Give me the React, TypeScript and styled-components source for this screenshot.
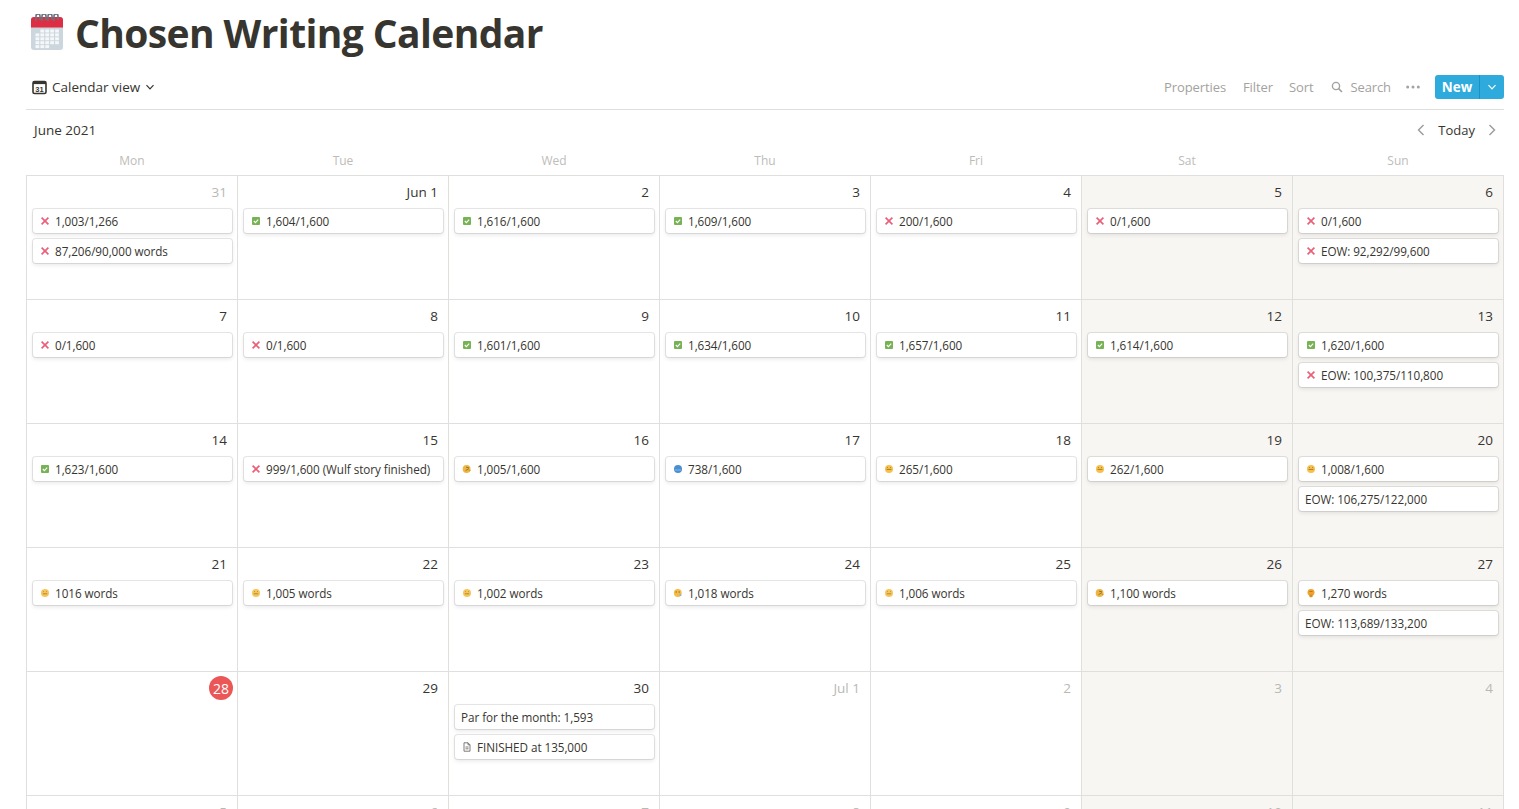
import React from "react";
import styled, { createGlobalStyle } from "styled-components";

const Global = createGlobalStyle`
  html, body { margin: 0; padding: 0; background: #fff; overflow: hidden; }
  body { font-family: "Open Sans", "Noto Sans", "Liberation Sans", sans-serif; color: #37352f; }
`;

const Page = styled.div`
  width: 1519px;
  height: 809px;
  overflow: hidden;
  padding: 0 15px 0 26px;
  box-sizing: border-box;
`;
const TitleRow = styled.div`
  display: flex;
  align-items: center;
  gap: 11px;
  height: 67px;
`;
const Title = styled.h1`
  margin: 0 0 2px;
  font-size: 39px;
  line-height: 48px;
  font-weight: 700;
  color: #37352f;
  letter-spacing: -0.6px;
`;
const Toolbar = styled.div`
  display: flex;
  align-items: center;
  height: 40px;
  border-bottom: 1px solid #dfdfde;
  padding-bottom: 2px;
`;
const ViewName = styled.div`
  display: flex;
  align-items: center;
  gap: 5px;
  padding-left: 6px;
  font-size: 13.5px;
  color: #37352f;
`;
const Spacer = styled.div`
  flex: 1;
`;
const Tool = styled.span<{ $gap?: number }>`
  font-size: 13px;
  letter-spacing: -0.1px;
  color: #a3a29e;
  margin-right: ${(p) => p.$gap ?? 16}px;
  display: inline-flex;
  align-items: center;
  gap: 7px;
`;
const NewButton = styled.div`
  display: flex;
  width: 69px;
  height: 24px;
  border-radius: 3px;
  background: #2eaadc;
  color: #fff;
  font-size: 13.5px;
  font-weight: 700;
  overflow: hidden;
`;
const NewLabel = styled.div`
  flex: 1;
  display: flex;
  align-items: center;
  justify-content: center;
  padding-bottom: 1px;
  border-right: 1px solid #1f8fbd;
`;
const NewCaret = styled.div`
  width: 24px;
  display: flex;
  align-items: center;
  justify-content: center;
`;
const MonthRow = styled.div`
  display: flex;
  align-items: center;
  height: 40px;
  padding: 0 4px 0 8px;
  font-size: 13.5px;
`;
const Today = styled.span`
  margin: 0 9px 0 9px;
  font-size: 13px;
`;
const Weekdays = styled.div`
  display: grid;
  grid-template-columns: repeat(7, 211px);
  height: 20px;
  padding: 0 0 5px 0.5px;
  align-items: center;
`;
const Weekday = styled.div`
  text-align: center;
  font-size: 12px;
  color: #bdbcb9;
`;
const Grid = styled.div`
  display: grid;
  grid-template-columns: repeat(7, 211px);
  grid-auto-rows: 124px;
  width: 1478px;
  box-sizing: border-box;
  border-top: 1px solid #dfdfde;
  border-left: 1px solid #dfdfde;
`;
const Cell = styled.div<{ $weekend: boolean }>`
  box-sizing: border-box;
  border-right: 1px solid #dfdfde;
  border-bottom: 1px solid #dfdfde;
  background: ${(p) => (p.$weekend ? "#f7f6f3" : "#fff")};
  padding: 0 4px 0 6px;
`;
const DateRow = styled.div<{ $muted: boolean }>`
  height: 32px;
  padding: 0 6px 1px 0;
  display: flex;
  align-items: center;
  justify-content: flex-end;
  font-size: 13.5px;
  color: ${(p) => (p.$muted ? "#b9b8b5" : "#37352f")};
`;
const TodayBadge = styled.span`
  width: 24px;
  height: 24px;
  margin-right: -6px;
  border-radius: 50%;
  background: #eb5757;
  color: #fff;
  font-size: 14px;
  display: flex;
  align-items: center;
  justify-content: center;
`;
const Card = styled.div`
  box-sizing: border-box;
  height: 24px;
  margin-bottom: 6px;
  width: 199px;
  display: flex;
  align-items: center;
  gap: 4px;
  padding: 0 6px;
  background: #fff;
  border-radius: 3px;
  box-shadow: rgba(15, 15, 15, 0.1) 0 0 0 1px, rgba(15, 15, 15, 0.1) 0 2px 4px;
  font-size: 11.7px;
  letter-spacing: -0.05px;
  color: #37352f;
  white-space: nowrap;
  overflow: hidden;
`;
const IconBox = styled.svg`
  width: 12px;
  height: 12px;
  flex: none;
`;

type Kind = "x" | "ok" | "grin" | "think" | "blue" | "smile" | "sob" | "hand" | "doc" | "none";

function Glyph({ kind }: { kind: Kind }) {
  if (kind === "none") return null;
  return (
    <IconBox viewBox="0 0 12 12">
      {kind === "x" && <path d="M2.6 2.6l6.8 6.8M9.4 2.6l-6.8 6.8" stroke="#ea6078" strokeWidth="1.7" fill="none" />}
      {kind === "ok" && (
        <>
          <rect x="2" y="2" width="8" height="8" rx="1" fill="#77b255" />
          <path d="M3.8 6l1.6 1.6 2.8-3" stroke="#fff" strokeWidth="1.1" fill="none" />
        </>
      )}
      {kind === "blue" && (
        <>
          <circle cx="6" cy="6" r="4" fill="#4a8fd0" />
          <path d="M3 7h6" stroke="#8ab9e4" strokeWidth="1" />
        </>
      )}
      {kind === "grin" && (
        <>
          <circle cx="6" cy="6" r="4" fill="#f7c04a" />
          <path d="M3.6 6.4h4.8" stroke="#9a7428" strokeWidth=".9" />
          <path d="M4 4.5h1M7 4.5h1" stroke="#9a7428" strokeWidth=".7" />
        </>
      )}
      {kind === "smile" && (
        <>
          <circle cx="6" cy="6" r="4" fill="#f7c65a" />
          <path d="M3.8 6.8h4.4" stroke="#a58338" strokeWidth=".9" />
          <path d="M4 4.6h1M7 4.6h1" stroke="#a58338" strokeWidth=".7" />
        </>
      )}
      {kind === "think" && (
        <>
          <circle cx="5.6" cy="6" r="3.9" fill="#f0b440" />
          <path d="M5 4.2l3 .6M4.6 7.6l3.4-2" stroke="#8f7a34" strokeWidth="1" />
          <path d="M8 8l1.4-1" stroke="#d9982e" strokeWidth="1.4" />
        </>
      )}
      {kind === "sob" && (
        <>
          <circle cx="5.8" cy="6" r="3.9" fill="#f5bb44" />
          <path d="M3.6 5h1.4M6.6 5h1.4" stroke="#7d6230" strokeWidth=".9" />
          <path d="M7.6 6.5l1.7 1.2v1.4H7.6z" fill="#7eb6d9" />
        </>
      )}
      {kind === "hand" && (
        <>
          <ellipse cx="6" cy="5.4" rx="3.5" ry="3.4" fill="#eda32e" />
          <rect x="4.4" y="7.6" width="3.2" height="2.6" rx="1" fill="#d98e22" />
          <path d="M4.4 4.5h3.2" stroke="#a8701c" strokeWidth=".8" />
        </>
      )}
      {kind === "doc" && (
        <path
          d="M3 1.8h4l2 2v6.4H3zM7 1.8v2h2M4.5 6h3M4.5 7.8h3"
          stroke="#6f6e6a"
          strokeWidth=".9"
          fill="none"
        />
      )}
    </IconBox>
  );
}

type Item = [Kind, string];
type Day = { d: string; m?: boolean; today?: boolean; items?: Item[] };

const days: Day[] = [
  { d: "31", m: true, items: [["x", "1,003/1,266"], ["x", "87,206/90,000 words"]] },
  { d: "Jun 1", items: [["ok", "1,604/1,600"]] },
  { d: "2", items: [["ok", "1,616/1,600"]] },
  { d: "3", items: [["ok", "1,609/1,600"]] },
  { d: "4", items: [["x", "200/1,600"]] },
  { d: "5", items: [["x", "0/1,600"]] },
  { d: "6", items: [["x", "0/1,600"], ["x", "EOW: 92,292/99,600"]] },
  { d: "7", items: [["x", "0/1,600"]] },
  { d: "8", items: [["x", "0/1,600"]] },
  { d: "9", items: [["ok", "1,601/1,600"]] },
  { d: "10", items: [["ok", "1,634/1,600"]] },
  { d: "11", items: [["ok", "1,657/1,600"]] },
  { d: "12", items: [["ok", "1,614/1,600"]] },
  { d: "13", items: [["ok", "1,620/1,600"], ["x", "EOW: 100,375/110,800"]] },
  { d: "14", items: [["ok", "1,623/1,600"]] },
  { d: "15", items: [["x", "999/1,600 (Wulf story finished)"]] },
  { d: "16", items: [["think", "1,005/1,600"]] },
  { d: "17", items: [["blue", "738/1,600"]] },
  { d: "18", items: [["grin", "265/1,600"]] },
  { d: "19", items: [["grin", "262/1,600"]] },
  { d: "20", items: [["grin", "1,008/1,600"], ["none", "EOW: 106,275/122,000"]] },
  { d: "21", items: [["smile", "1016 words"]] },
  { d: "22", items: [["smile", "1,005 words"]] },
  { d: "23", items: [["smile", "1,002 words"]] },
  { d: "24", items: [["sob", "1,018 words"]] },
  { d: "25", items: [["smile", "1,006 words"]] },
  { d: "26", items: [["think", "1,100 words"]] },
  { d: "27", items: [["hand", "1,270 words"], ["none", "EOW: 113,689/133,200"]] },
  { d: "28", today: true },
  { d: "29" },
  { d: "30", items: [["none", "Par for the month: 1,593"], ["doc", "FINISHED at 135,000"]] },
  { d: "Jul 1", m: true },
  { d: "2", m: true },
  { d: "3", m: true },
  { d: "4", m: true },
  { d: "5", m: true },
  { d: "6", m: true },
  { d: "7", m: true },
  { d: "8", m: true },
  { d: "9", m: true },
  { d: "10", m: true },
  { d: "11", m: true },
];

const weekdays = ["Mon", "Tue", "Wed", "Thu", "Fri", "Sat", "Sun"];

function CalendarEmoji() {
  return (
    <svg width="38" height="40" viewBox="0 0 38 40">
      <rect x="5" y="3" width="32" height="33" rx="3" fill="#ccd6dd" />
      <path d="M5 13.5V6a3 3 0 0 1 3-3h26a3 3 0 0 1 3 3v7.5z" fill="#dd2e44" />
      <g fill="#f5f8fa">
        {[0, 1, 2, 3, 4].flatMap((r) =>
          [0, 1, 2, 3, 4].filter((c) => !(r === 4 && c > 2) && !(r === 0 && c < 1)).map((c) => (
            <rect key={`${r}-${c}`} x={9.5 + c * 4.9} y={15.5 + r * 3.9} width="3.8" height="3" />
          ))
        )}
      </g>
      <g fill="none" stroke="#66757f" strokeWidth="1.6">
        {[10, 16, 22, 28].map((x) => (
          <path key={x} d={`M${x} 7V2a2 2 0 0 1 4 0v4`} />
        ))}
      </g>
    </svg>
  );
}

function ViewIcon() {
  return (
    <svg width="15" height="15" viewBox="0 0 15 15">
      <rect x="1" y="1.5" width="13" height="12" rx="1.5" fill="none" stroke="#37352f" strokeWidth="1.6" />
      <rect x="1" y="1.5" width="13" height="2.6" fill="#37352f" />
      <text x="7.5" y="11.6" fontSize="7.5" fontWeight="700" textAnchor="middle" fill="#37352f" fontFamily="Liberation Sans, sans-serif">31</text>
    </svg>
  );
}

const Caret = ({ color }: { color: string }) => (
  <svg width="10" height="10" viewBox="0 0 10 10">
    <path d="M1.5 3.2L5 6.8l3.5-3.6" fill="none" stroke={color} strokeWidth="1.2" />
  </svg>
);

const Arrow = ({ dir }: { dir: "l" | "r" }) => (
  <svg width="16" height="16" viewBox="0 0 16 16">
    <path d={dir === "l" ? "M10.5 3L5.5 8l5 5" : "M5.5 3l5 5-5 5"} fill="none" stroke="#9b9a97" strokeWidth="1.4" />
  </svg>
);

export default function App() {
  return (
    <Page>
      <Global />
      <TitleRow>
        <CalendarEmoji />
        <Title>Chosen Writing Calendar</Title>
      </TitleRow>
      <Toolbar>
        <ViewName>
          <ViewIcon />
          Calendar view
          <Caret color="#37352f" />
        </ViewName>
        <Spacer />
        <Tool $gap={17}>Properties</Tool>
        <Tool>Filter</Tool>
        <Tool $gap={18}>Sort</Tool>
        <Tool $gap={15}>
          <svg width="12" height="12" viewBox="0 0 12 12">
            <circle cx="5" cy="5" r="3.6" fill="none" stroke="#a3a29e" strokeWidth="1.4" />
            <path d="M7.6 7.6L11 11" stroke="#a3a29e" strokeWidth="1.6" />
          </svg>
          Search
        </Tool>
        <Tool $gap={15}>
          <svg width="14" height="4" viewBox="0 0 14 4">
            <circle cx="1.7" cy="2" r="1.5" fill="#a3a29e" />
            <circle cx="7" cy="2" r="1.5" fill="#a3a29e" />
            <circle cx="12.3" cy="2" r="1.5" fill="#a3a29e" />
          </svg>
        </Tool>
        <NewButton>
          <NewLabel>New</NewLabel>
          <NewCaret>
            <Caret color="#fff" />
          </NewCaret>
        </NewButton>
      </Toolbar>
      <MonthRow>
        June 2021
        <Spacer />
        <Arrow dir="l" />
        <Today>Today</Today>
        <Arrow dir="r" />
      </MonthRow>
      <Weekdays>
        {weekdays.map((w) => (
          <Weekday key={w}>{w}</Weekday>
        ))}
      </Weekdays>
      <Grid>
        {days.map((day, i) => (
          <Cell key={i} $weekend={i % 7 >= 5}>
            <DateRow $muted={!!day.m}>
              {day.today ? <TodayBadge>{day.d}</TodayBadge> : day.d}
            </DateRow>
            {day.items?.map(([k, t]) => (
              <Card key={t}>
                <Glyph kind={k} />
                <span>{t}</span>
              </Card>
            ))}
          </Cell>
        ))}
      </Grid>
    </Page>
  );
}
